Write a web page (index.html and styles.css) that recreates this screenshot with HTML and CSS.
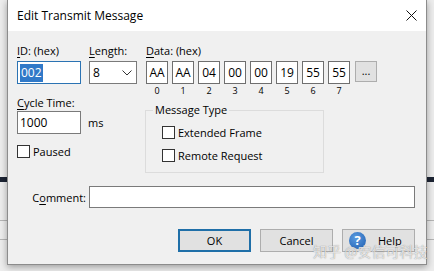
FILE: index.html
```html
<!DOCTYPE html>
<html lang="en">
<head>
    <meta charset="UTF-8">
    <title>Edit Transmit Message</title>
    <link rel="stylesheet" href="styles.css">
</head>
<body>
    <div class="backdrop">
        <div class="backdrop-bar"></div>
        <div class="backdrop-line"></div>
        <div class="backdrop-line second"></div>
    </div>

    <div class="dialog">
        <div class="titlebar">
            <span class="title">Edit Transmit Message</span>
            <svg class="close" viewBox="0 0 11 11"><path d="M0.5 0.5 L10.5 10.5 M10.5 0.5 L0.5 10.5" stroke="#111" stroke-width="1" fill="none"/></svg>
        </div>

        <div class="content">
            <div class="row-top">
                <div class="field field-id">
                    <span class="lbl"><u>I</u>D: (hex)</span>
                    <div class="textbox focused"><span class="sel">002</span></div>
                </div>
                <div class="field field-len">
                    <span class="lbl"><u>L</u>ength:</span>
                    <div class="combo">
                        <span>8</span>
                        <svg class="chevron" viewBox="0 0 10 6"><path d="M0.5 0.5 L5 5 L9.5 0.5" stroke="#333" stroke-width="1" fill="none"/></svg>
                    </div>
                </div>
                <div class="field field-data">
                    <span class="lbl"><u>D</u>ata: (hex)</span>
                    <div class="bytes">
                        <div class="byte"><div class="bytebox">AA</div><div class="idx">0</div></div>
                        <div class="byte"><div class="bytebox">AA</div><div class="idx">1</div></div>
                        <div class="byte"><div class="bytebox">04</div><div class="idx">2</div></div>
                        <div class="byte"><div class="bytebox">00</div><div class="idx">3</div></div>
                        <div class="byte"><div class="bytebox">00</div><div class="idx">4</div></div>
                        <div class="byte"><div class="bytebox">19</div><div class="idx">5</div></div>
                        <div class="byte"><div class="bytebox">55</div><div class="idx">6</div></div>
                        <div class="byte"><div class="bytebox">55</div><div class="idx">7</div></div>
                        <div class="btn more">...</div>
                    </div>
                </div>
            </div>

            <div class="row-mid">
                <div class="col-left">
                    <span class="lbl tight"><u>C</u>ycle Time:</span>
                    <div class="cycle">
                        <div class="textbox">1000</div>
                        <span>ms</span>
                    </div>
                    <div class="check paused"><span class="box"></span>Paused</div>
                </div>
                <fieldset class="group">
                    <legend>Message Type</legend>
                    <div class="check"><span class="box"></span>Extended Frame</div>
                    <div class="check"><span class="box"></span>Remote Request</div>
                </fieldset>
            </div>

            <div class="row-comment">
                <span class="comment-lbl">C<u>o</u>mment:</span>
                <div class="textbox comment"></div>
            </div>

            <div class="row-buttons">
                <div class="btn default">OK</div>
                <div class="btn">Cancel</div>
                <div class="btn help"><span class="qicon">?</span><span>Help</span></div>
            </div>
        </div>
    </div>

    <div class="watermark">知乎 @安信可科技</div>
</body>
</html>
```

FILE: styles.css
```css
* {
    box-sizing: border-box;
}
body {
    margin: 0;
    width: 434px;
    height: 271px;
    overflow: hidden;
    position: relative;
    background: #ededed;
    font-family: "Open Sans", "Noto Sans", sans-serif;
    font-size: 11px;
    color: #000;
}
u {
    text-decoration-thickness: 1px;
    text-underline-offset: 2px;
}

/* window behind the dialog */
.backdrop {
    padding-top: 177px;
}
.backdrop-bar {
    height: 5px;
    background: #1c2433;
}
.backdrop-line {
    height: 1px;
    margin-top: 38px;
    background: #b5b5b5;
}
.backdrop-line.second {
    margin-top: 18px;
}

.dialog {
    position: absolute;
    left: 7px;
    top: 0;
    width: 420px;
    height: 265px;
    background: #f0f0f0;
    border: 1px solid #8c8c8c;
    border-top: 0;
    box-shadow: 0 2px 7px rgba(0, 0, 0, 0.35);
}
.titlebar {
    height: 31px;
    background: #fff;
    display: flex;
    align-items: center;
    justify-content: space-between;
    padding: 0 9px;
}
.title {
    font-size: 12px;
}
.close {
    width: 11px;
    height: 11px;
}

.content {
    padding: 12px 11px 0 9px;
}
.lbl {
    display: block;
    line-height: 15px;
    margin-bottom: 3px;
    white-space: nowrap;
}
.lbl.tight {
    line-height: 14px;
    margin-bottom: 1px;
}

.row-top {
    display: flex;
}
.field-id {
    width: 64px;
    margin-right: 8px;
}
.field-len {
    width: 48px;
    margin-right: 9px;
}
.textbox {
    height: 23px;
    background: #fff;
    border: 1px solid #7a7a7a;
    padding: 0 2px;
    line-height: 21px;
    font-size: 12px;
}
.textbox.focused {
    border-color: #2b73b3;
}
.sel {
    display: inline-block;
    background: #3079c8;
    color: #fff;
    line-height: 18px;
    margin-top: 1px;
    padding: 0 1px;
}
.combo {
    height: 23px;
    background: #fff;
    border: 1px solid #7a7a7a;
    display: flex;
    align-items: center;
    justify-content: space-between;
    padding: 0 4px 0 3px;
    font-size: 12px;
}
.chevron {
    width: 10px;
    height: 6px;
}

.bytes {
    display: flex;
    align-items: flex-start;
    gap: 4px;
}
.byte {
    width: 22px;
}
.bytebox {
    height: 23px;
    background: #fff;
    border: 1px solid #6f6f6f;
    text-align: center;
    line-height: 21px;
    font-size: 12px;
}
.idx {
    text-align: center;
    font-size: 9px;
    line-height: 10px;
    margin-top: 2px;
}
.btn {
    background: #e1e1e1;
    border: 1px solid #adadad;
    display: flex;
    align-items: center;
    justify-content: center;
}
.more {
    width: 22px;
    height: 21px;
    margin-left: 1px;
    padding-bottom: 3px;
}

.row-mid {
    display: flex;
}
.col-left {
    width: 128px;
}
.cycle {
    display: flex;
    align-items: center;
    gap: 7px;
}
.cycle .textbox {
    width: 64px;
}
.check {
    display: flex;
    align-items: center;
    line-height: 15px;
    gap: 3px;
}
.box {
    width: 13px;
    height: 13px;
    background: #fff;
    border: 1px solid #333;
}
.check.paused {
    margin-top: 10px;
}

.group {
    width: 179px;
    height: 70px;
    margin: 7px 0 0;
    padding: 0 0 8px 16px;
    border: 1px solid #dcdcdc;
}
.group legend {
    margin-left: -9px;
    padding: 0 2px;
    line-height: 14px;
}
.group .check {
    margin-top: 8px;
}

.row-comment {
    display: flex;
    align-items: center;
    margin-top: 13px;
}
.comment-lbl {
    width: 72px;
    text-align: right;
    padding-right: 3px;
}
.textbox.comment {
    flex: 1;
    height: 22px;
}

.row-buttons {
    display: flex;
    justify-content: flex-end;
    gap: 9px;
    margin-top: 21px;
}
.row-buttons .btn {
    width: 73px;
    height: 23px;
    font-size: 11px;
}
.btn.default {
    border: 2px solid #1f6fa8;
}
.btn.help {
    justify-content: flex-start;
    padding-left: 6px;
    gap: 12px;
}
.qicon {
    width: 17px;
    height: 17px;
    border-radius: 50%;
    background: radial-gradient(circle at 40% 35%, #5a9be0, #1f5eb0);
    color: #fff;
    font-weight: bold;
    font-size: 13px;
    line-height: 17px;
    text-align: center;
}

.watermark {
    position: absolute;
    left: 313px;
    top: 242px;
    font-family: "Noto Sans CJK SC", sans-serif;
    font-size: 14px;
    line-height: 18px;
    color: rgba(255, 255, 255, 0.75);
    text-shadow: 0 0 1px rgba(90, 90, 90, 0.8);
    white-space: nowrap;
}
```
